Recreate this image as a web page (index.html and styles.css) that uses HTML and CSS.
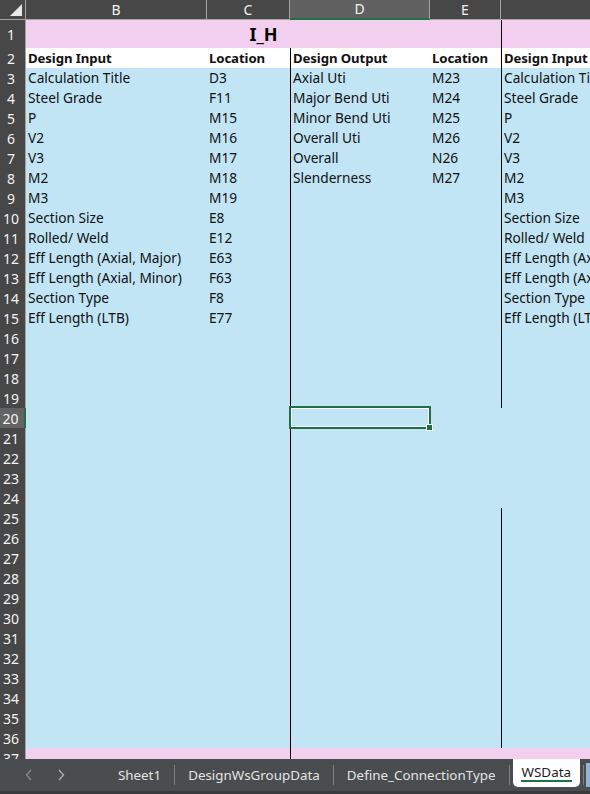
FILE: index.html
```html
<!DOCTYPE html>
<html>
<head>
<meta charset="utf-8">
<link rel="stylesheet" href="styles.css">
</head>
<body>
<div class="app">
  <div class="sheet">
    <div class="row hdr">
      <div class="corner"><span class="tri"></span></div>
      <div class="ch">B</div>
      <div class="ch">C</div>
      <div class="ch sel">D</div>
      <div class="ch">E</div>
      <div class="ch last"></div>
    </div>
    <div class="row r1">
      <div class="rh">1</div>
      <div class="c pink merged">I_H</div>
      <div class="c pink lf"></div>
    </div>
    <div class="row">
      <div class="rh">2</div>
      <div class="c white bold">Design Input</div>
      <div class="c white bold">Location</div>
      <div class="c white bold ld">Design Output</div>
      <div class="c white bold">Location</div>
      <div class="c white bold lf">Design Input</div>
    </div>
    <div class="row"><div class="rh">3</div><div class="c">Calculation Title</div><div class="c">D3</div><div class="c ld">Axial Uti</div><div class="c">M23</div><div class="c lf">Calculation Title</div></div>
    <div class="row"><div class="rh">4</div><div class="c">Steel Grade</div><div class="c">F11</div><div class="c ld">Major Bend Uti</div><div class="c">M24</div><div class="c lf">Steel Grade</div></div>
    <div class="row"><div class="rh">5</div><div class="c">P</div><div class="c">M15</div><div class="c ld">Minor Bend Uti</div><div class="c">M25</div><div class="c lf">P</div></div>
    <div class="row"><div class="rh">6</div><div class="c">V2</div><div class="c">M16</div><div class="c ld">Overall Uti</div><div class="c">M26</div><div class="c lf">V2</div></div>
    <div class="row"><div class="rh">7</div><div class="c">V3</div><div class="c">M17</div><div class="c ld">Overall</div><div class="c">N26</div><div class="c lf">V3</div></div>
    <div class="row"><div class="rh">8</div><div class="c">M2</div><div class="c">M18</div><div class="c ld">Slenderness</div><div class="c">M27</div><div class="c lf">M2</div></div>
    <div class="row"><div class="rh">9</div><div class="c">M3</div><div class="c">M19</div><div class="c ld"></div><div class="c"></div><div class="c lf">M3</div></div>
    <div class="row"><div class="rh">10</div><div class="c">Section Size</div><div class="c">E8</div><div class="c ld"></div><div class="c"></div><div class="c lf">Section Size</div></div>
    <div class="row"><div class="rh">11</div><div class="c">Rolled/ Weld</div><div class="c">E12</div><div class="c ld"></div><div class="c"></div><div class="c lf">Rolled/ Weld</div></div>
    <div class="row"><div class="rh">12</div><div class="c">Eff Length (Axial, Major)</div><div class="c">E63</div><div class="c ld"></div><div class="c"></div><div class="c lf">Eff Length (Axial, Major)</div></div>
    <div class="row"><div class="rh">13</div><div class="c">Eff Length (Axial, Minor)</div><div class="c">F63</div><div class="c ld"></div><div class="c"></div><div class="c lf">Eff Length (Axial, Minor)</div></div>
    <div class="row"><div class="rh">14</div><div class="c">Section Type</div><div class="c">F8</div><div class="c ld"></div><div class="c"></div><div class="c lf">Section Type</div></div>
    <div class="row"><div class="rh">15</div><div class="c">Eff Length (LTB)</div><div class="c">E77</div><div class="c ld"></div><div class="c"></div><div class="c lf">Eff Length (LTB)</div></div>
    <div class="row"><div class="rh">16</div><div class="c"></div><div class="c"></div><div class="c ld"></div><div class="c"></div><div class="c lf"></div></div>
    <div class="row"><div class="rh">17</div><div class="c"></div><div class="c"></div><div class="c ld"></div><div class="c"></div><div class="c lf"></div></div>
    <div class="row"><div class="rh">18</div><div class="c"></div><div class="c"></div><div class="c ld"></div><div class="c"></div><div class="c lf"></div></div>
    <div class="row"><div class="rh">19</div><div class="c"></div><div class="c"></div><div class="c ld"></div><div class="c"></div><div class="c lf"></div></div>
    <div class="row"><div class="rh rsel">20</div><div class="c"></div><div class="c"></div><div class="c ld active"><span class="selbox"><span class="handle"></span></span></div><div class="c"></div><div class="c"></div></div>
    <div class="row"><div class="rh">21</div><div class="c"></div><div class="c"></div><div class="c ld"></div><div class="c"></div><div class="c"></div></div>
    <div class="row"><div class="rh">22</div><div class="c"></div><div class="c"></div><div class="c ld"></div><div class="c"></div><div class="c"></div></div>
    <div class="row"><div class="rh">23</div><div class="c"></div><div class="c"></div><div class="c ld"></div><div class="c"></div><div class="c"></div></div>
    <div class="row"><div class="rh">24</div><div class="c"></div><div class="c"></div><div class="c ld"></div><div class="c"></div><div class="c"></div></div>
    <div class="row"><div class="rh">25</div><div class="c"></div><div class="c"></div><div class="c ld"></div><div class="c"></div><div class="c lf"></div></div>
    <div class="row"><div class="rh">26</div><div class="c"></div><div class="c"></div><div class="c ld"></div><div class="c"></div><div class="c lf"></div></div>
    <div class="row"><div class="rh">27</div><div class="c"></div><div class="c"></div><div class="c ld"></div><div class="c"></div><div class="c lf"></div></div>
    <div class="row"><div class="rh">28</div><div class="c"></div><div class="c"></div><div class="c ld"></div><div class="c"></div><div class="c lf"></div></div>
    <div class="row"><div class="rh">29</div><div class="c"></div><div class="c"></div><div class="c ld"></div><div class="c"></div><div class="c lf"></div></div>
    <div class="row"><div class="rh">30</div><div class="c"></div><div class="c"></div><div class="c ld"></div><div class="c"></div><div class="c lf"></div></div>
    <div class="row"><div class="rh">31</div><div class="c"></div><div class="c"></div><div class="c ld"></div><div class="c"></div><div class="c lf"></div></div>
    <div class="row"><div class="rh">32</div><div class="c"></div><div class="c"></div><div class="c ld"></div><div class="c"></div><div class="c lf"></div></div>
    <div class="row"><div class="rh">33</div><div class="c"></div><div class="c"></div><div class="c ld"></div><div class="c"></div><div class="c lf"></div></div>
    <div class="row"><div class="rh">34</div><div class="c"></div><div class="c"></div><div class="c ld"></div><div class="c"></div><div class="c lf"></div></div>
    <div class="row"><div class="rh">35</div><div class="c"></div><div class="c"></div><div class="c ld"></div><div class="c"></div><div class="c lf"></div></div>
    <div class="row"><div class="rh">36</div><div class="c"></div><div class="c"></div><div class="c ld"></div><div class="c"></div><div class="c lf"></div></div>
    <div class="row"><div class="rh">37</div><div class="c pink"></div><div class="c pink"></div><div class="c pink ld"></div><div class="c pink"></div><div class="c pink"></div></div>
  </div>
  <div class="tabbar">
    <div class="nav">
      <svg width="10" height="12" viewBox="0 0 10 12"><path d="M7 1 L2.5 6 L7 11" fill="none" stroke="#8c8c8c" stroke-width="1.3"/></svg>
      <svg width="10" height="12" viewBox="0 0 10 12"><path d="M3 1 L7.5 6 L3 11" fill="none" stroke="#b0b0b0" stroke-width="1.3"/></svg>
    </div>
    <div class="tabs">
      <span class="tab">Sheet1</span>
      <span class="sep"></span>
      <span class="tab">DesignWsGroupData</span>
      <span class="sep"></span>
      <span class="tab">Define_ConnectionType</span>
      <span class="sep"></span>
      <span class="tab active">WSData</span>
      <span class="sep"></span>
      <span class="more"></span>
    </div>
  </div>
</div>
</body>
</html>
```
FILE: styles.css
```css
* { box-sizing: border-box; }
html, body { margin: 0; padding: 0; }
body {
  width: 590px;
  height: 794px;
  overflow: hidden;
  background: #c1e5f5;
  font-family: "Noto Sans", "Liberation Sans", sans-serif;
}
.app {
  width: 590px;
  height: 794px;
  display: flex;
  flex-direction: column;
  overflow: hidden;
}
.sheet {
  height: 759px;
  overflow: hidden;
  flex: none;
}
.row {
  display: grid;
  grid-template-columns: 26px 181px 83px 140px 71px 89px;
  height: 20px;
}
.hdr { height: 20px; }
.r1 { height: 28px; }
.corner {
  background: #474747;
  border-right: 1px solid #a3a3a3;
  border-bottom: 1px solid #a3a3a3;
  position: relative;
}
.tri {
  position: absolute;
  left: 10px;
  top: 4px;
  width: 0;
  height: 0;
  border-left: 12px solid transparent;
  border-bottom: 12px solid #e8e8e8;
}
.ch {
  background: #474747;
  color: #f2f2f2;
  font-size: 14px;
  line-height: 19px;
  text-align: center;
  border-right: 1px solid #a3a3a3;
  border-bottom: 1px solid #a3a3a3;
}
.ch.last { border-right: none; }
.ch.sel {
  background: #616161;
  border-bottom: 2px solid #1e7145;
  line-height: 18px;
}
.rh {
  background: #474747;
  color: #f2f2f2;
  font-size: 14px;
  line-height: 19px;
  padding-top: 1px;
  text-align: center;
  padding-right: 3px;
  border-right: 1px solid #a3a3a3;
  border-bottom: 1px solid #a3a3a3;
}
.r1 .rh { line-height: 28px; padding-top: 1px; }
.rh.rsel {
  background: #636363;
  border-right: 2px solid #1e7145;
}
.c {
  background: #c1e5f5;
  color: #111;
  font-size: 13.7px;
  line-height: 20px;
  padding-left: 2px;
  white-space: nowrap;
  overflow: hidden;
  position: relative;
}
.pink { background: #f2cfee; }
.white { background: #ffffff; }
.bold { font-weight: 700; font-size: 13.2px; letter-spacing: -0.1px; }
.merged {
  grid-column: span 4;
  text-align: center;
  font-weight: 700;
  font-size: 18px;
  line-height: 28px;
  padding-left: 0;
  color: #000;
}
.ld { border-left: 1px solid #000; padding-left: 2px; }
.lf { border-left: 1px solid #000; padding-left: 2px; }
.active { overflow: visible; z-index: 2; }
.selbox {
  position: absolute;
  left: -2px;
  top: -2px;
  width: 142px;
  height: 23px;
  border: 2px solid #1e7145;
  box-shadow: inset 0 0 0 1px #ffffff;
}
.handle {
  position: absolute;
  right: -4px;
  bottom: -4px;
  width: 7px;
  height: 7px;
  background: #1e7145;
  border: 1px solid #ffffff;
}
.tabbar {
  flex: none;
  height: 35px;
  background: #4a4d4f;
  border-bottom: 3px solid #3a3a3a;
  display: flex;
  align-items: stretch;
  font-family: "Noto Sans", "Liberation Sans", sans-serif;
}
.nav {
  width: 107px;
  display: flex;
  align-items: center;
  gap: 22px;
  padding-left: 24px;
}
.tabs {
  display: flex;
  align-items: center;
  flex: 1;
  white-space: nowrap;
}
.tab {
  color: #e3e3e3;
  font-size: 13.4px;
  padding: 0 13px;
  line-height: 31px;
}
.sep {
  width: 1px;
  height: 20px;
  background: #7e7e7e;
  flex: none;
}
.tab.active {
  background: #ffffff;
  color: #222;
  border-radius: 0 0 5px 5px;
  align-self: flex-start;
  height: 28px;
  line-height: 27px;
  padding: 0 9px;
  margin: 0 3px;
  position: relative;
}
.tab.active::after {
  content: "";
  position: absolute;
  left: 8px;
  right: 8px;
  bottom: 5px;
  height: 2px;
  background: #1e7145;
}
.more {
  width: 4px;
  height: 24px;
  margin-left: 2px;
  background: #8fb5d8;
  align-self: center;
}
```
